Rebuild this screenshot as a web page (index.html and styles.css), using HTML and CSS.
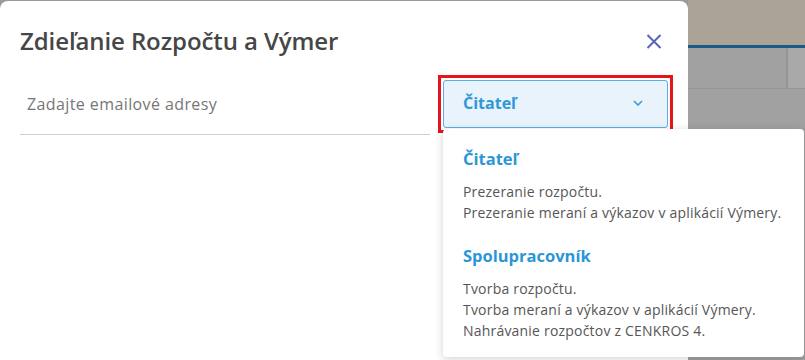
FILE: index.html
```html
<!DOCTYPE html>
<html lang="sk">
<head>
    <meta charset="UTF-8">
    <meta name="viewport" content="width=device-width, initial-scale=1.0">
    <title>Zdieľanie Rozpočtu a Výmer</title>
    <link rel="stylesheet" href="styles.css">
</head>
<body>
    <div class="dialog">
        <div class="dialog-header">
            <h2 class="dialog-title">Zdieľanie Rozpočtu a Výmer</h2>
            <button class="close-btn" aria-label="Zavrieť">
                <svg width="16" height="15" viewBox="0 0 16 15">
                    <path d="M1.5 1 L14.5 14 M14.5 1 L1.5 14" stroke="#5663b9" stroke-width="2" fill="none"/>
                </svg>
            </button>
        </div>
        <div class="share-row">
            <input class="email-input" type="text" placeholder="Zadajte emailové adresy">
            <div class="select-frame">
                <div class="role-select">
                    <span class="role-value">Čitateľ</span>
                    <svg width="10" height="6" viewBox="0 0 10 6">
                        <path d="M1 1 L5 5 L9 1" stroke="#3a9bd8" stroke-width="1.6" fill="none"/>
                    </svg>
                </div>
            </div>
        </div>
    </div>

    <div class="backdrop">
        <div class="bg-top"></div>
        <div class="bg-line"></div>
        <div class="bg-grid">
            <div class="bg-cell"></div>
            <div class="bg-cell"></div>
        </div>
    </div>

    <!-- open role menu -->
    <div class="role-menu">
        <div class="role-option">
            <div class="role-name">Čitateľ</div>
            <p>Prezeranie rozpočtu.<br>Prezeranie meraní a výkazov v aplikácií Výmery.</p>
        </div>
        <div class="role-option">
            <div class="role-name">Spolupracovník</div>
            <p>Tvorba rozpočtu.<br>Tvorba meraní a výkazov v aplikácií Výmery.<br>Nahrávanie rozpočtov z CENKROS 4.</p>
        </div>
    </div>
</body>
</html>
```

FILE: styles.css
```css
* {
    box-sizing: border-box;
}
body {
    margin: 0;
    height: 360px;
    overflow: hidden;
    display: flex;
    font-family: "Open Sans", Lato, sans-serif;
    background: #9a9a9a;
}
.dialog {
    width: 688px;
    flex: none;
    margin-top: 1px;
    background: #fff;
    border-radius: 8px 8px 0 0;
    padding: 0 20px;
}
.dialog-header {
    display: flex;
    justify-content: space-between;
    align-items: center;
    padding-top: 25px;
    padding-right: 6px;
}
.dialog-title {
    margin: 0;
    font-size: 24px;
    line-height: 30px;
    font-weight: 600;
    letter-spacing: -0.1px;
    color: #464646;
}
.close-btn {
    border: none;
    background: none;
    padding: 0;
    display: flex;
}
.share-row {
    display: flex;
    align-items: flex-start;
    gap: 8px;
    margin-top: 19px;
}
.email-input {
    width: 410px;
    flex: none;
    border: none;
    border-bottom: 1px solid #cfcfcf;
    padding: 19px 7px 20px;
    font-family: inherit;
    font-size: 16px;
    line-height: 20px;
    letter-spacing: 0.4px;
    color: #444;
    outline: none;
}
.email-input::placeholder {
    color: #767676;
}
.select-frame {
    flex: none;
    border: 3px solid #e8141c;
    padding: 2px;
}
.role-select {
    width: 225px;
    height: 48px;
    display: flex;
    align-items: center;
    justify-content: space-between;
    padding: 0 24px 3px 19px;
    background: #e8f3fb;
    border: 1px solid #5aaee6;
    border-radius: 3px;
}
.role-value {
    font-size: 16px;
    font-weight: 700;
    color: #2e98d8;
    line-height: 20px;
}
.backdrop {
    flex: 1;
    display: flex;
    flex-direction: column;
}
.bg-top {
    height: 45px;
    background: #aba397;
}
.bg-line {
    height: 3px;
    background: #1c5a87;
}
.bg-grid {
    flex: 1;
    display: flex;
    background: #a1a1a1;
}
.bg-cell {
    width: 100px;
    height: 41px;
    border-right: 2px solid #949494;
    border-bottom: 1px solid #959595;
}
.bg-cell + .bg-cell {
    flex: 1;
    border-right: none;
    background: #a8a8a8;
}
.role-menu {
    position: absolute;
    left: 443px;
    top: 129px;
    width: 361px;
    height: 228px;
    background: #fff;
    border-radius: 4px;
    box-shadow: 0 2px 10px rgba(0, 0, 0, 0.18);
    padding: 20px 20px 0;
}
.role-option + .role-option {
    margin-top: 23px;
}
.role-name {
    font-size: 16.5px;
    line-height: 20px;
    font-weight: 700;
    color: #2b96d6;
}
.role-option p {
    margin: 12px 0 0;
    font-size: 14px;
    line-height: 21px;
    letter-spacing: 0.2px;
    color: #565656;
}
```
